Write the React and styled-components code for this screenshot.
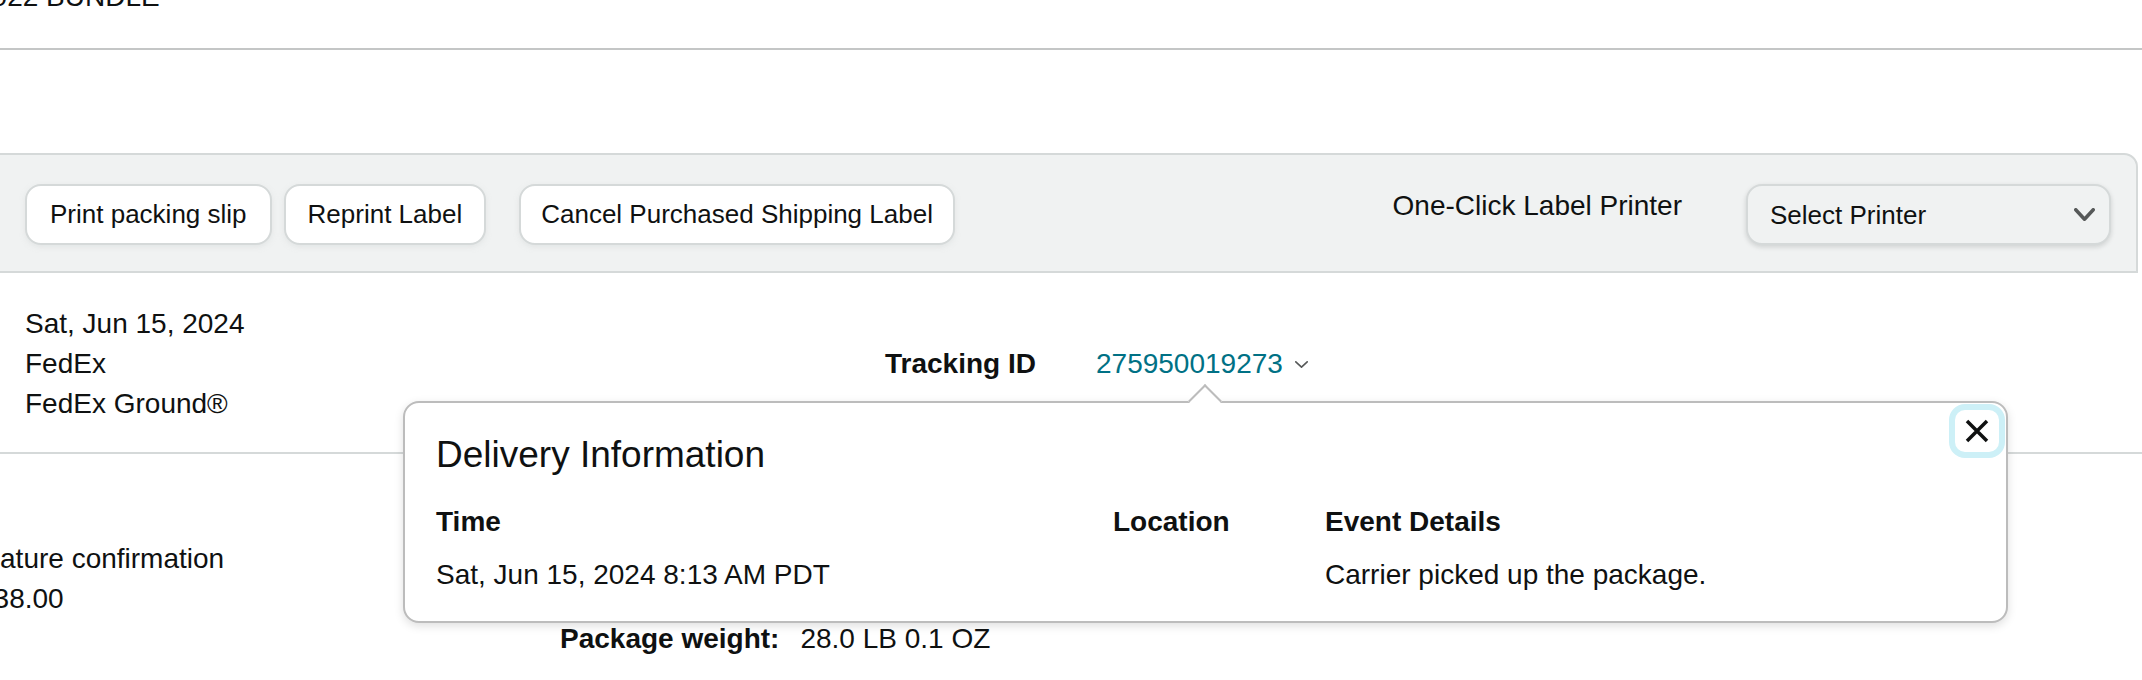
import React from "react";
import styled, { createGlobalStyle } from "styled-components";

const GlobalStyle = createGlobalStyle`
  html, body {
    margin: 0;
    padding: 0;
    background: #fff;
    overflow: hidden;
  }
  body {
    font-family: "Liberation Sans", Arial, sans-serif;
    color: #0f1111;
  }
`;

const Page = styled.div`
  width: 2142px;
  height: 680px;
  overflow: hidden;
  font-size: 28px;
  line-height: 40px;
`;

const Header = styled.div`
  margin-top: -23px;
  padding-bottom: 31px;
  border-bottom: 2px solid #c4c6c6;
  margin-bottom: 103px;
`;

const HeaderTitle = styled.div`
  margin-left: -24px;
  white-space: nowrap;
`;

const Toolbar = styled.div`
  box-sizing: border-box;
  height: 120px;
  margin-left: -20px;
  margin-right: 4px;
  padding: 3px 25px 0 43px;
  display: flex;
  align-items: center;
  background: #f0f2f2;
  border: 2px solid #d5d9d9;
  border-top-right-radius: 14px;
`;

const Button = styled.button`
  box-sizing: border-box;
  height: 61px;
  margin-left: ${(p) => p.$gap || 0}px;
  padding: 0 ${(p) => p.$pad || 22}px;
  font-family: inherit;
  font-size: 26px;
  color: #0f1111;
  background: #fff;
  border: 2px solid #d5d9d9;
  border-radius: 16px;
  box-shadow: 0 2px 5px 0 rgba(213, 217, 217, 0.5);
  white-space: nowrap;
  cursor: pointer;
`;

const PrinterLabel = styled.span`
  margin-left: auto;
  margin-right: 64px;
  margin-bottom: 18px;
  white-space: nowrap;
`;

const Select = styled.div`
  box-sizing: border-box;
  width: 365px;
  height: 61px;
  padding: 0 14px 0 22px;
  display: flex;
  align-items: center;
  justify-content: space-between;
  font-size: 26px;
  background: #f0f2f2;
  border: 2px solid #d5d9d9;
  border-radius: 16px;
  box-shadow: 0 2px 5px 0 rgba(15, 17, 17, 0.15);
`;

const Row = styled.div`
  position: relative;
  display: grid;
  grid-template-columns: 860px 211px auto;
  align-items: center;
  padding: 31px 0 28px 25px;
  border-bottom: 2px solid #d5d9d9;
`;

const Lines = styled.div`
  display: flex;
  flex-direction: column;
`;

const Label = styled.span`
  font-weight: 700;
  white-space: nowrap;
`;

const TrackingLink = styled.a`
  display: flex;
  align-items: center;
  gap: 12px;
  color: #007185;
  text-decoration: none;
`;

const Popover = styled.div`
  position: absolute;
  top: 128px;
  left: 403px;
  width: 1605px;
  box-sizing: border-box;
  padding: 28px 31px 26px;
  background: #fff;
  border: 2px solid #bcbcbc;
  border-radius: 16px;
  box-shadow: 0 3px 10px rgba(0, 0, 0, 0.13);
  z-index: 2;

  &::before {
    content: "";
    position: absolute;
    left: 788px;
    top: -14px;
    width: 24px;
    height: 24px;
    box-sizing: border-box;
    background: #fff;
    border-top: 2px solid #bcbcbc;
    border-left: 2px solid #bcbcbc;
    transform: rotate(45deg);
  }
`;

const PopoverTitle = styled.h2`
  margin: 0;
  font-size: 37px;
  line-height: 48px;
  font-weight: 400;
`;

const EventGrid = styled.div`
  display: grid;
  grid-template-columns: 677px 212px 1fr;
  grid-template-rows: 40px 40px;
  row-gap: 13px;
  margin-top: 23px;
`;

const HeadCell = styled.div`
  font-weight: 700;
  white-space: nowrap;
`;

const Cell = styled.div`
  white-space: nowrap;
`;

const CloseButton = styled.button`
  position: absolute;
  top: 1px;
  right: 1px;
  width: 56px;
  height: 54px;
  box-sizing: border-box;
  padding: 0;
  display: flex;
  align-items: center;
  justify-content: center;
  background: #fff;
  border: 6px solid #cdf0f7;
  border-radius: 16px;
  cursor: pointer;
`;

const Bottom = styled.div`
  padding-top: 85px;
  display: flex;
  flex-direction: column;
`;

const ShipOptions = styled.div`
  margin-left: -56px;
  display: flex;
  flex-direction: column;
  white-space: nowrap;
`;

const Line = styled.span`
  padding-left: ${(p) => p.$indent || 0}px;
`;

const WeightRow = styled.div`
  margin-left: 560px;
  display: flex;
  gap: 21px;
  white-space: nowrap;
`;

const Chevron = ({ w, h, stroke, color }) => (
  <svg width={w} height={h} viewBox={`0 0 ${w} ${h}`} fill="none">
    <path
      d={`M${stroke / 2} ${stroke / 2} L${w / 2} ${h - stroke / 2} L${w - stroke / 2} ${stroke / 2}`}
      stroke={color}
      strokeWidth={stroke}
      strokeLinecap="round"
      strokeLinejoin="round"
    />
  </svg>
);

export default function App() {
  return (
    <>
      <GlobalStyle />
      <Page>
        <Header>
          <HeaderTitle>2022 BUNDLE</HeaderTitle>
        </Header>

        <Toolbar>
          <Button $pad={23}>Print packing slip</Button>
          <Button $gap={12}>Reprint Label</Button>
          <Button $gap={33} $pad={20}>Cancel Purchased Shipping Label</Button>
          <PrinterLabel>One-Click Label Printer</PrinterLabel>
          <Select>
            <span>Select Printer</span>
            <Chevron w={21} h={13} stroke={3.5} color="#565959" />
          </Select>
        </Toolbar>

        <Row>
          <Lines>
            <span>Sat, Jun 15, 2024</span>
            <span>FedEx</span>
            <span>FedEx Ground®</span>
          </Lines>
          <Label>Tracking ID</Label>
          <TrackingLink href="#">
            275950019273
            <Chevron w={13} h={7} stroke={1.6} color="#565959" />
          </TrackingLink>

          <Popover>
            <CloseButton aria-label="Close">
              <svg width="24" height="24" viewBox="0 0 24 24" fill="none">
                <path d="M2 2 L22 22 M22 2 L2 22" stroke="#0f1111" strokeWidth="3.5" />
              </svg>
            </CloseButton>
            <PopoverTitle>Delivery Information</PopoverTitle>
            <EventGrid>
              <HeadCell>Time</HeadCell>
              <HeadCell>Location</HeadCell>
              <HeadCell>Event Details</HeadCell>
              <Cell>Sat, Jun 15, 2024 8:13 AM PDT</Cell>
              <Cell></Cell>
              <Cell>Carrier picked up the package.</Cell>
            </EventGrid>
          </Popover>
        </Row>

        <Bottom>
          <ShipOptions>
            <Line>Signature confirmation</Line>
            <Line $indent={34}>$38.00</Line>
          </ShipOptions>
          <WeightRow>
            <Label>Package weight:</Label>
            <span>28.0 LB 0.1 OZ</span>
          </WeightRow>
        </Bottom>
      </Page>
    </>
  );
}
